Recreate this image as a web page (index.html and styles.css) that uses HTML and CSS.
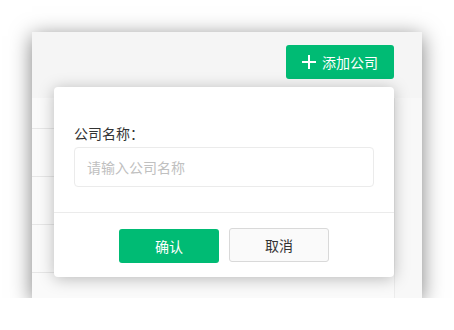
FILE: index.html
```html
<!DOCTYPE html>
<html lang="zh">
<head>
<meta charset="utf-8">
<link rel="stylesheet" href="styles.css">
</head>
<body>
<div class="window">
  <div class="toolbar">
    <button class="btn-add">
      <svg class="plus" width="14" height="14" viewBox="0 0 14 14"><path d="M7 0V14M0 7H14" stroke="#fff" stroke-width="2"/></svg>
      <span>添加公司</span>
    </button>
  </div>
  <div class="content">
    <div class="rows">
      <div class="row first"></div>
      <div class="row"></div>
      <div class="row"></div>
      <div class="row"></div>
    </div>
    <div class="gutter"></div>
  </div>
  <div class="dialog">
    <div class="dialog-body">
      <label class="label">公司名称：</label>
      <div class="input">请输入公司名称</div>
    </div>
    <div class="dialog-footer">
      <button class="btn btn-primary">确认</button>
      <button class="btn btn-default">取消</button>
    </div>
  </div>
</div>
</body>
</html>
```
FILE: styles.css
```css
* { box-sizing: border-box; }
html, body { margin: 0; padding: 0; background: #fff; }
body {
  font-family: "Noto Sans CJK SC", "Noto Sans", sans-serif;
  font-size: 14px;
  color: #333;
}
.window {
  position: relative;
  width: 390px;
  height: 266px;
  margin: 32px 0 0 32px;
  background: #fff;
  box-shadow: 0 4px 20px rgba(0, 0, 0, 0.5);
  display: flex;
  flex-direction: column;
}
.toolbar {
  height: 66px;
  background: #f5f5f5;
  display: flex;
  justify-content: flex-end;
  align-items: flex-start;
  padding: 13px 28px 0 0;
}
.btn-add {
  width: 108px;
  height: 34px;
  border: none;
  border-radius: 3px;
  background: #00bb74;
  color: #fff;
  font-family: inherit;
  font-size: 14px;
  display: flex;
  align-items: center;
  justify-content: center;
  gap: 6px;
  padding: 0;
}
.btn-add span { line-height: 20px; }
.content {
  flex: 1;
  display: flex;
}
.rows { flex: 1; background: #fafafa; }
.row {
  height: 48px;
  border-bottom: 1px solid #e6e6e6;
}
.row.first { height: 31px; }
.gutter {
  width: 28px;
  border-left: 1px solid #ececec;
  background: #f8f8f8;
}
.dialog {
  position: absolute;
  left: 22px;
  top: 55px;
  width: 340px;
  height: 190px;
  background: #fff;
  border-radius: 4px;
  box-shadow: 0 2px 16px rgba(0, 0, 0, 0.26);
  display: flex;
  flex-direction: column;
}
.dialog-body {
  padding: 36px 20px 0;
  height: 126px;
  border-bottom: 1px solid #ebebeb;
}
.label {
  display: block;
  line-height: 20px;
  color: #333;
}
.input {
  margin-top: 4px;
  height: 40px;
  border: 1px solid #ebebeb;
  border-radius: 4px;
  padding: 0 12px;
  line-height: 38px;
  color: #c0c0c0;
}
.dialog-footer {
  display: flex;
  justify-content: center;
  gap: 10px;
  padding-top: 16px;
}
.btn {
  width: 100px;
  height: 34px;
  border-radius: 3px;
  font-family: inherit;
  font-size: 14px;
  padding: 0;
}
.btn-primary {
  background: #00bb74;
  border: none;
  color: #fff;
}
.btn-default {
  background: #fafafa;
  border: 1px solid #d9d9d9;
  color: #333;
  margin-top: -1px;
}
```
